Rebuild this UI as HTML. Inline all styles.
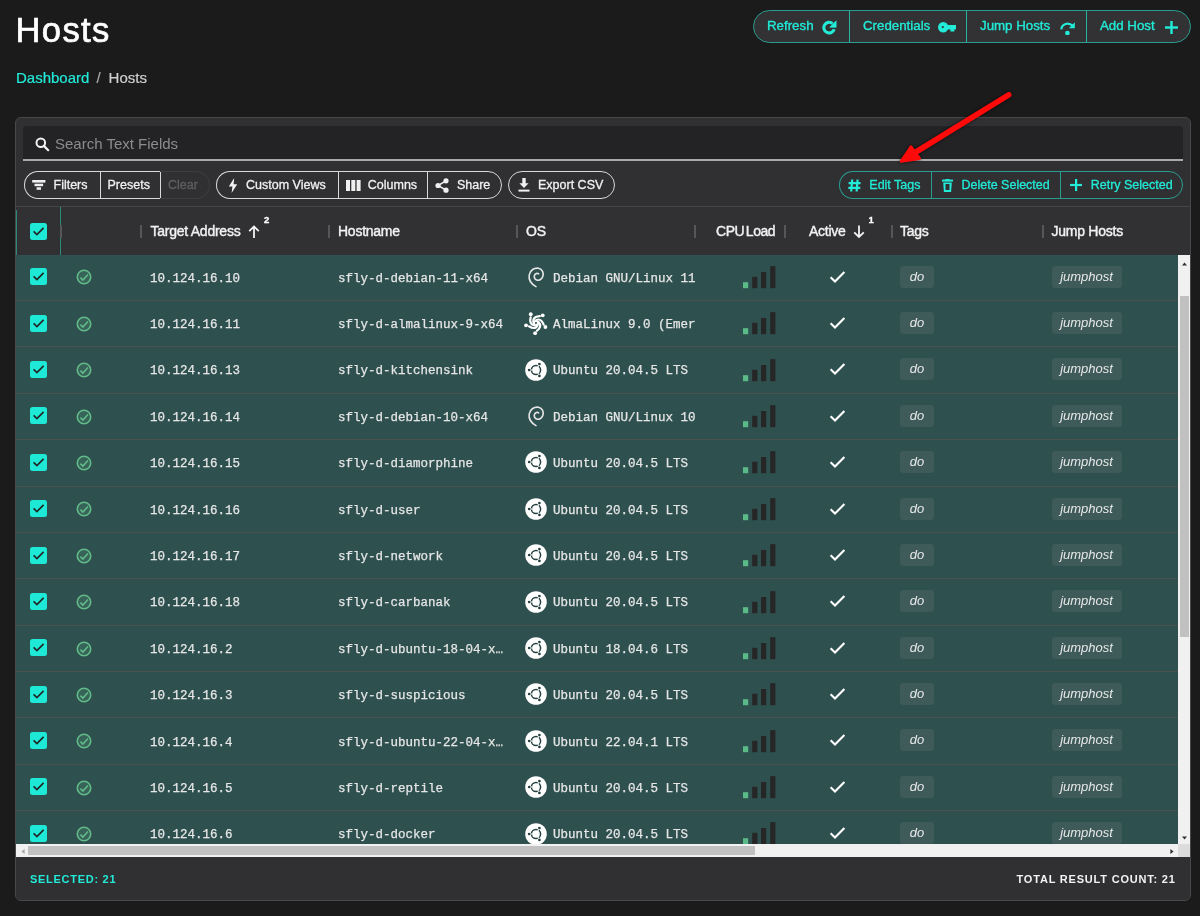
<!DOCTYPE html>
<html><head><meta charset="utf-8">
<style>
*{box-sizing:border-box;margin:0;padding:0}
html,body{-webkit-font-smoothing:antialiased;width:1200px;height:916px;overflow:hidden;background:#1b1b1b;font-family:"Liberation Sans",sans-serif;color:#fff}
.abs{position:absolute}
h1{position:absolute;left:15.5px;top:9.5px;font-size:34.6px;font-weight:normal;line-height:40px;color:#fff;letter-spacing:1.35px;-webkit-text-stroke:0.7px #fff}
.bc{position:absolute;left:16px;top:68px;font-size:15px;line-height:20px;color:#cfcfcf;-webkit-text-stroke:0.2px}
.bc a{color:#22ebd8;text-decoration:none}
.bc .sep{margin:0 8px 0 7px;color:#aaa}
.hbtns{position:absolute;left:753px;top:10px;width:438px;height:33px;border:1px solid #2a9d90;border-radius:17px;background:#323234;overflow:hidden}
.hbtn{position:absolute;top:0;height:31px;border-left:1px solid #2ab3a5;color:#22ebd8;font-size:13.3px;line-height:31px;-webkit-text-stroke:0.35px #22ebd8}
.hbtn span{position:absolute;top:-1px}
.hbtn svg{position:absolute}
.card{position:absolute;left:15px;top:117px;width:1176px;height:784px;border:1px solid #48484a;border-radius:6px;background:#303032;overflow:hidden}
.search{position:absolute;left:7px;top:8px;width:1160px;height:35px;background:#232325;border-radius:4px 4px 0 0;border-bottom:2px solid #a9a9a9}
.search .ph{position:absolute;left:32px;top:9px;font-size:15px;line-height:18px;color:#8c8c8c}
.tb{position:absolute;top:53px;height:28px;border:1.5px solid #d9d9d9;color:#f0f0f0;font-size:12.5px;line-height:26px;-webkit-text-stroke:0.3px}
.tb span{position:absolute;top:0}
.tb svg{position:absolute}
.act{position:absolute;top:53px;height:28px;border:1px solid #2a9d90;color:#22ebd8;font-size:12.5px;line-height:26px;background:#303032;-webkit-text-stroke:0.3px #22ebd8}
.act span{position:absolute;top:0}
.act svg{position:absolute}
.thead{position:absolute;left:0;top:88px;width:1174px;height:49.5px;border-top:1px solid #464648;background:#313133}
.th{position:absolute;top:0;height:49px;font-size:14px;line-height:49px;color:#f2f2f2;letter-spacing:-0.25px;white-space:nowrap;-webkit-text-stroke:0.4px #f2f2f2}
.rz{position:absolute;top:18px;width:2px;height:12.5px;background:#565656}
.sup{position:absolute;font-size:9.5px;font-weight:bold;line-height:10px;color:#fff;-webkit-text-stroke:0.3px #fff}
.tbody{position:absolute;left:0;top:136.6px;width:1162px;height:589.4px;overflow:hidden;background:#2e504f}
.row{position:absolute;left:0;width:1162px;height:46.39px;border-bottom:1px solid #4a5050;background:#2e504f}
.row>div{position:absolute}
.cb{top:13.6px}
.st{left:59.6px;top:14.8px}
.mono{font-family:"Liberation Mono",monospace;font-size:12.5px;line-height:16px;top:16.1px;color:#e6e6e6;white-space:nowrap;-webkit-text-stroke:0.25px #e6e6e6}
.ip{left:134px}
.hn{left:322px}
.osi-ubuntu{left:508.9px;top:11.3px}.osi-debian{left:504px;top:7.2px}.osi-alma{left:504px;top:6.8px}
.os{left:537px}
.bars{left:726.5px;top:11.2px}
.chk{left:813px;top:15px}
.tag{top:11px;height:22px;border-radius:3px;background:#3e5b5a;font-style:italic;font-size:13px;line-height:22px;color:#e8e8e8;text-align:center}
.tg1{left:884px;width:34px}
.tg2{left:1035.5px;width:70px}
.vscroll{position:absolute;left:1162px;top:136.6px;width:12px;height:589.4px;background:#f1f1f1}
.hscroll{position:absolute;left:0;top:726px;width:1162px;height:13px;background:#f1f1f1}
.corner{position:absolute;left:1162px;top:726px;width:12px;height:13px;background:#dcdcdc}
.footer{position:absolute;left:0;top:739px;width:1174px;height:44px;background:#303032}
.ft{position:absolute;top:15px;font-size:11px;font-weight:bold;letter-spacing:0.72px;line-height:14px}
</style></head><body><div id="root" style="position:absolute;left:0;top:0;width:1200px;height:916px;will-change:transform">
<h1>Hosts</h1>
<div class="bc"><a>Dashboard</a><span class="sep">/</span>Hosts</div>

<div class="hbtns">
 <div class="hbtn" style="left:-1px;width:96px;border-left:none"><span style="left:14px">Refresh</span><svg style="left:69px;top:9px" width="15" height="15" viewBox="0 0 15 15"><path d="M12.2 9.2 A5.3 5.3 0 1 1 10.6 3.6" fill="none" stroke="#22ebd8" stroke-width="3.1"/><path d="M14.2 0.8 V7.3 H7.7 Z" fill="#22ebd8" stroke="#22ebd8" stroke-width="0.6" stroke-linejoin="round"/></svg></div>
 <div class="hbtn" style="left:95px;width:118px"><span style="left:13px">Credentials</span><svg style="left:88px;top:10.5px" width="19" height="11" viewBox="0 0 19 11"><circle cx="5.2" cy="5.2" r="5.2" fill="#22ebd8"/><circle cx="4.8" cy="5.1" r="1.1" fill="#323234"/><rect x="9" y="3" width="9" height="4.4" fill="#22ebd8"/><rect x="12.4" y="3" width="4" height="6.5" fill="#22ebd8"/></svg></div>
 <div class="hbtn" style="left:212px;width:120px"><span style="left:13px">Jump Hosts</span><svg style="left:93px;top:7px" width="16" height="17" viewBox="0 0 16 17"><path d="M1.3 11.3 C 2 6 8 3.5 13 8" fill="none" stroke="#22ebd8" stroke-width="2.3"/><path d="M14.8 4.2 V10.3 H8.8 Z" fill="#22ebd8"/><circle cx="7.4" cy="15" r="2.3" fill="#22ebd8"/></svg></div>
 <div class="hbtn" style="left:332px;width:106px"><span style="left:13px">Add Host</span><svg style="left:78px;top:10px" width="13" height="13" viewBox="0 0 13 13"><rect x="5.3" y="0" width="2.4" height="13" fill="#22ebd8"/><rect x="0" y="5.3" width="13" height="2.4" fill="#22ebd8"/></svg></div>
</div>

<div class="card">
 <div class="search"><svg class="abs" style="left:12px;top:11px" width="15" height="15" viewBox="0 0 15 15"><circle cx="5.8" cy="5.8" r="4.3" fill="none" stroke="#f2f2f2" stroke-width="2"/><path d="M8.9 8.9 L13.2 13.2" stroke="#f2f2f2" stroke-width="2.2" stroke-linecap="round"/></svg><span class="ph">Search Text Fields</span></div>
 <!-- toolbar left -->
 <div class="tb" style="left:7.5px;width:77px;border-radius:15px 0 0 15px;border-right:none"><svg style="left:7px;top:8px" width="14" height="11" viewBox="0 0 14 11"><rect x="0.2" y="0" width="13.2" height="2.6" fill="#f0f0f0"/><rect x="2.5" y="3.7" width="8.6" height="2.5" fill="#f0f0f0"/><rect x="4.6" y="7.3" width="4.4" height="2.5" fill="#f0f0f0"/></svg><span style="left:29px">Filters</span></div>
 <div class="tb" style="left:83.5px;width:61px"><span style="left:7px">Presets</span></div>
 <div class="tb" style="left:144px;width:50px;border-radius:0 15px 15px 0;border:1px solid #3d3d3f;border-left:none;color:#5f5f61"><span style="left:8px">Clear</span></div>

 <div class="tb" style="left:200px;width:123px;border-radius:15px 0 0 15px;border-right:none"><svg style="left:11px;top:6px" width="10" height="15" viewBox="0 0 10 15"><path d="M6.2 0 L0.8 8.6 H4.4 L3.6 15 L9.2 6.2 H5.6 Z" fill="#f0f0f0"/></svg><span style="left:29px">Custom Views</span></div>
 <div class="tb" style="left:321.8px;width:90px;border-right:none"><svg style="left:7px;top:8px" width="15" height="11" viewBox="0 0 15 11"><rect x="0" y="0" width="4" height="11" fill="#f0f0f0"/><rect x="5.3" y="0" width="4" height="11" fill="#f0f0f0"/><rect x="10.6" y="0" width="4" height="11" fill="#f0f0f0"/></svg><span style="left:29px">Columns</span></div>
 <div class="tb" style="left:410.9px;width:75px;border-radius:0 15px 15px 0"><svg style="left:7px;top:6px" width="14" height="15" viewBox="0 0 14 15"><circle cx="11" cy="2.8" r="2.6" fill="#f0f0f0"/><circle cx="3" cy="7.5" r="2.6" fill="#f0f0f0"/><circle cx="11" cy="12.2" r="2.6" fill="#f0f0f0"/><path d="M11 2.8 L3 7.5 L11 12.2" fill="none" stroke="#f0f0f0" stroke-width="1.5"/></svg><span style="left:29px">Share</span></div>

 <div class="tb" style="left:492px;width:107px;border-radius:15px"><svg style="left:9px;top:6px" width="12" height="14" viewBox="0 0 12 14"><path d="M4.3 0 H7.7 V5.2 H10.6 L6 10 L1.4 5.2 H4.3 Z" fill="#f0f0f0"/><rect x="0.5" y="11.6" width="11" height="2" fill="#f0f0f0"/></svg><span style="left:29px">Export CSV</span></div>

 <!-- action group -->
 <div class="act" style="left:823.3px;width:92px;border-radius:15px 0 0 15px;border-right:none"><svg style="left:8px;top:7px" width="13" height="13" viewBox="0 0 13 13"><path d="M4.2 0.5 L3.2 12.5 M9.6 0.5 L8.6 12.5 M0.6 4.2 H12.6 M0.3 8.8 H12.3" stroke="#22ebd8" stroke-width="2.2"/></svg><span style="left:29px">Edit Tags</span></div>
 <div class="act" style="left:914.5px;width:130px;border-right:none"><svg style="left:10px;top:7px" width="11" height="13" viewBox="0 0 11 13"><rect x="0" y="0.6" width="11" height="2" fill="#22ebd8"/><rect x="3.5" y="0" width="4" height="1.5" fill="#22ebd8"/><path d="M1.2 3.6 H9.8 L9.1 13 H1.9 Z" fill="#22ebd8"/><rect x="3.5" y="5" width="4" height="6" fill="#303032"/></svg><span style="left:30px">Delete Selected</span></div>
 <div class="act" style="left:1043.7px;width:123px;border-radius:0 15px 15px 0"><svg style="left:9px;top:7px" width="12" height="12" viewBox="0 0 12 12"><rect x="5" y="0" width="2.2" height="12" fill="#22ebd8"/><rect x="0" y="4.9" width="12" height="2.2" fill="#22ebd8"/></svg><span style="left:30px">Retry Selected</span></div>

 <!-- table header -->
 <div class="thead">
  <div class="abs" style="left:0;top:3px;width:1px;height:46px;background:#2a8a7c"></div>
  <div class="abs" style="left:44px;top:0;width:1px;height:49px;background:#2a8a7c"></div>
  <div class="abs" style="left:14px;top:16px"><svg width="17" height="17" viewBox="0 0 17 17"><rect x="0" y="0" width="17" height="17" rx="2.5" fill="#1de9d6"/><path d="M3.6 8.4 L6.9 11.6 L13.6 4.9" fill="none" stroke="#232325" stroke-width="1.65"/></svg></div>
  <div class="rz" style="left:44px"></div>
  <div class="rz" style="left:124px"></div>
  <div class="th" style="left:134.5px">Target Address</div>
  <svg class="abs" style="left:232px;top:18px" width="12" height="14" viewBox="0 0 12 14"><path d="M6 1.5 V13 M1.2 6.2 L6 1.5 L10.8 6.2" fill="none" stroke="#f2f2f2" stroke-width="1.8"/></svg>
  <div class="sup" style="left:248px;top:8px">2</div>
  <div class="rz" style="left:312px"></div>
  <div class="th" style="left:322px">Hostname</div>
  <div class="rz" style="left:500px"></div>
  <div class="th" style="left:510px">OS</div>
  <div class="rz" style="left:678px"></div>
  <div class="th" style="left:700px;word-spacing:-1.8px;letter-spacing:-0.45px">CPU Load</div>
  <div class="rz" style="left:767.5px"></div>
  <div class="th" style="left:793px">Active</div>
  <svg class="abs" style="left:837px;top:18px" width="12" height="14" viewBox="0 0 12 14"><path d="M6 0.5 V12 M1.2 7.3 L6 12 L10.8 7.3" fill="none" stroke="#f2f2f2" stroke-width="1.8"/></svg>
  <div class="sup" style="left:852.5px;top:8px">1</div>
  <div class="rz" style="left:874.5px"></div>
  <div class="th" style="left:884px">Tags</div>
  <div class="rz" style="left:1025.5px"></div>
  <div class="th" style="left:1035.5px">Jump Hosts</div>
 </div>
 <div class="tbody">
 <div class="row" style="top:0.00px">
<div class="cb" style="left:14px"><svg width="17" height="17" viewBox="0 0 17 17"><rect x="0" y="0" width="17" height="17" rx="2.5" fill="#1de9d6"/><path d="M3.6 8.4 L6.9 11.6 L13.6 4.9" fill="none" stroke="#232325" stroke-width="1.65"/></svg></div>
<div class="st"><svg width="16" height="16" viewBox="0 0 16 16"><circle cx="8" cy="8" r="6.7" fill="rgba(98,187,136,0.18)" stroke="#62bb88" stroke-width="1.6"/><path d="M4.4 8.7 L6.9 11.1 L12 5.5" fill="none" stroke="#62bb88" stroke-width="1.6"/></svg></div>
<div class="mono ip">10.124.16.10</div>
<div class="mono hn">sfly-d-debian-11-x64</div>
<div class="osi osi-debian"><svg width="30" height="30" viewBox="0 0 30 30"><path d="M16 24.6 C 10.5 21.5, 8.6 17, 9.2 13 C 10 8, 14.5 5.6, 18.5 6.2 C 22.5 7, 24 11, 22.8 14.6 C 21.8 17.6, 18.8 18.8, 16.6 18 C 14.4 17.2, 13.6 14.6, 14.8 12.8 C 15.8 11.3, 17.6 11.2, 18.6 11.8" fill="none" stroke="#e6e6e6" stroke-width="1.6" stroke-linecap="round"/></svg></div>
<div class="mono os">Debian GNU/Linux 11</div>
<div class="bars"><svg width="33" height="23" viewBox="0 0 33 23"><rect x="0" y="16.2" width="5.2" height="6" fill="#5bbb88"/><rect x="9.2" y="10.8" width="5.2" height="11.4" fill="#262626"/><rect x="18" y="6" width="5.2" height="16.2" fill="#262626"/><rect x="27.2" y="0.2" width="5.2" height="22" fill="#262626"/></svg></div>
<div class="chk"><svg width="17" height="14" viewBox="0 0 17 14"><path d="M1.6 7.2 L6 11.6 L15.4 2" fill="none" stroke="#fff" stroke-width="2.1"/></svg></div>
<div class="tag tg1">do</div>
<div class="tag tg2">jumphost</div>
</div><div class="row" style="top:46.39px">
<div class="cb" style="left:14px"><svg width="17" height="17" viewBox="0 0 17 17"><rect x="0" y="0" width="17" height="17" rx="2.5" fill="#1de9d6"/><path d="M3.6 8.4 L6.9 11.6 L13.6 4.9" fill="none" stroke="#232325" stroke-width="1.65"/></svg></div>
<div class="st"><svg width="16" height="16" viewBox="0 0 16 16"><circle cx="8" cy="8" r="6.7" fill="rgba(98,187,136,0.18)" stroke="#62bb88" stroke-width="1.6"/><path d="M4.4 8.7 L6.9 11.1 L12 5.5" fill="none" stroke="#62bb88" stroke-width="1.6"/></svg></div>
<div class="mono ip">10.124.16.11</div>
<div class="mono hn">sfly-d-almalinux-9-x64</div>
<div class="osi osi-alma"><svg width="32" height="30" viewBox="0 0 32 30"><g fill="#fff"><circle cx="10.75" cy="6.26" r="1.9"/><path d="M10.68 9.30 C8.79 17.07 14.04 17.90 16.55 16.92" fill="none" stroke="#fff" stroke-width="2.2" stroke-linecap="round"/><circle cx="22.69" cy="7.30" r="1.9"/><path d="M19.78 8.18 C11.81 8.78 12.64 14.04 14.34 16.12" fill="none" stroke="#fff" stroke-width="2.2" stroke-linecap="round"/><circle cx="25.39" cy="18.99" r="1.9"/><path d="M23.66 16.49 C20.62 9.09 15.88 11.50 14.42 13.77" fill="none" stroke="#fff" stroke-width="2.2" stroke-linecap="round"/><circle cx="15.11" cy="25.16" r="1.9"/><path d="M16.95 22.74 C23.05 17.57 19.29 13.80 16.68 13.12" fill="none" stroke="#fff" stroke-width="2.2" stroke-linecap="round"/><circle cx="6.06" cy="17.29" r="1.9"/><path d="M8.93 18.30 C15.74 22.50 18.15 17.76 18.00 15.07" fill="none" stroke="#fff" stroke-width="2.2" stroke-linecap="round"/></g></svg></div>
<div class="mono os">AlmaLinux 9.0 (Emer</div>
<div class="bars"><svg width="33" height="23" viewBox="0 0 33 23"><rect x="0" y="16.2" width="5.2" height="6" fill="#5bbb88"/><rect x="9.2" y="10.8" width="5.2" height="11.4" fill="#262626"/><rect x="18" y="6" width="5.2" height="16.2" fill="#262626"/><rect x="27.2" y="0.2" width="5.2" height="22" fill="#262626"/></svg></div>
<div class="chk"><svg width="17" height="14" viewBox="0 0 17 14"><path d="M1.6 7.2 L6 11.6 L15.4 2" fill="none" stroke="#fff" stroke-width="2.1"/></svg></div>
<div class="tag tg1">do</div>
<div class="tag tg2">jumphost</div>
</div><div class="row" style="top:92.78px">
<div class="cb" style="left:14px"><svg width="17" height="17" viewBox="0 0 17 17"><rect x="0" y="0" width="17" height="17" rx="2.5" fill="#1de9d6"/><path d="M3.6 8.4 L6.9 11.6 L13.6 4.9" fill="none" stroke="#232325" stroke-width="1.65"/></svg></div>
<div class="st"><svg width="16" height="16" viewBox="0 0 16 16"><circle cx="8" cy="8" r="6.7" fill="rgba(98,187,136,0.18)" stroke="#62bb88" stroke-width="1.6"/><path d="M4.4 8.7 L6.9 11.1 L12 5.5" fill="none" stroke="#62bb88" stroke-width="1.6"/></svg></div>
<div class="mono ip">10.124.16.13</div>
<div class="mono hn">sfly-d-kitchensink</div>
<div class="osi osi-ubuntu"><svg width="22" height="22" viewBox="0 0 22 22"><circle cx="11" cy="11" r="10.8" fill="#fff"/><circle cx="11" cy="11" r="4.6" fill="none" stroke="#24403f" stroke-width="1.5"/><path d="M7.40 11.00 L5.10 11.00" stroke="#fff" stroke-width="1.2"/><path d="M12.80 7.88 L13.95 5.89" stroke="#fff" stroke-width="1.2"/><path d="M12.80 14.12 L13.95 16.11" stroke="#fff" stroke-width="1.2"/><circle cx="4.20" cy="11.00" r="1.35" fill="#24403f"/><circle cx="14.40" cy="5.11" r="1.35" fill="#24403f"/><circle cx="14.40" cy="16.89" r="1.35" fill="#24403f"/></svg></div>
<div class="mono os">Ubuntu 20.04.5 LTS</div>
<div class="bars"><svg width="33" height="23" viewBox="0 0 33 23"><rect x="0" y="16.2" width="5.2" height="6" fill="#5bbb88"/><rect x="9.2" y="10.8" width="5.2" height="11.4" fill="#262626"/><rect x="18" y="6" width="5.2" height="16.2" fill="#262626"/><rect x="27.2" y="0.2" width="5.2" height="22" fill="#262626"/></svg></div>
<div class="chk"><svg width="17" height="14" viewBox="0 0 17 14"><path d="M1.6 7.2 L6 11.6 L15.4 2" fill="none" stroke="#fff" stroke-width="2.1"/></svg></div>
<div class="tag tg1">do</div>
<div class="tag tg2">jumphost</div>
</div><div class="row" style="top:139.17px">
<div class="cb" style="left:14px"><svg width="17" height="17" viewBox="0 0 17 17"><rect x="0" y="0" width="17" height="17" rx="2.5" fill="#1de9d6"/><path d="M3.6 8.4 L6.9 11.6 L13.6 4.9" fill="none" stroke="#232325" stroke-width="1.65"/></svg></div>
<div class="st"><svg width="16" height="16" viewBox="0 0 16 16"><circle cx="8" cy="8" r="6.7" fill="rgba(98,187,136,0.18)" stroke="#62bb88" stroke-width="1.6"/><path d="M4.4 8.7 L6.9 11.1 L12 5.5" fill="none" stroke="#62bb88" stroke-width="1.6"/></svg></div>
<div class="mono ip">10.124.16.14</div>
<div class="mono hn">sfly-d-debian-10-x64</div>
<div class="osi osi-debian"><svg width="30" height="30" viewBox="0 0 30 30"><path d="M16 24.6 C 10.5 21.5, 8.6 17, 9.2 13 C 10 8, 14.5 5.6, 18.5 6.2 C 22.5 7, 24 11, 22.8 14.6 C 21.8 17.6, 18.8 18.8, 16.6 18 C 14.4 17.2, 13.6 14.6, 14.8 12.8 C 15.8 11.3, 17.6 11.2, 18.6 11.8" fill="none" stroke="#e6e6e6" stroke-width="1.6" stroke-linecap="round"/></svg></div>
<div class="mono os">Debian GNU/Linux 10</div>
<div class="bars"><svg width="33" height="23" viewBox="0 0 33 23"><rect x="0" y="16.2" width="5.2" height="6" fill="#5bbb88"/><rect x="9.2" y="10.8" width="5.2" height="11.4" fill="#262626"/><rect x="18" y="6" width="5.2" height="16.2" fill="#262626"/><rect x="27.2" y="0.2" width="5.2" height="22" fill="#262626"/></svg></div>
<div class="chk"><svg width="17" height="14" viewBox="0 0 17 14"><path d="M1.6 7.2 L6 11.6 L15.4 2" fill="none" stroke="#fff" stroke-width="2.1"/></svg></div>
<div class="tag tg1">do</div>
<div class="tag tg2">jumphost</div>
</div><div class="row" style="top:185.56px">
<div class="cb" style="left:14px"><svg width="17" height="17" viewBox="0 0 17 17"><rect x="0" y="0" width="17" height="17" rx="2.5" fill="#1de9d6"/><path d="M3.6 8.4 L6.9 11.6 L13.6 4.9" fill="none" stroke="#232325" stroke-width="1.65"/></svg></div>
<div class="st"><svg width="16" height="16" viewBox="0 0 16 16"><circle cx="8" cy="8" r="6.7" fill="rgba(98,187,136,0.18)" stroke="#62bb88" stroke-width="1.6"/><path d="M4.4 8.7 L6.9 11.1 L12 5.5" fill="none" stroke="#62bb88" stroke-width="1.6"/></svg></div>
<div class="mono ip">10.124.16.15</div>
<div class="mono hn">sfly-d-diamorphine</div>
<div class="osi osi-ubuntu"><svg width="22" height="22" viewBox="0 0 22 22"><circle cx="11" cy="11" r="10.8" fill="#fff"/><circle cx="11" cy="11" r="4.6" fill="none" stroke="#24403f" stroke-width="1.5"/><path d="M7.40 11.00 L5.10 11.00" stroke="#fff" stroke-width="1.2"/><path d="M12.80 7.88 L13.95 5.89" stroke="#fff" stroke-width="1.2"/><path d="M12.80 14.12 L13.95 16.11" stroke="#fff" stroke-width="1.2"/><circle cx="4.20" cy="11.00" r="1.35" fill="#24403f"/><circle cx="14.40" cy="5.11" r="1.35" fill="#24403f"/><circle cx="14.40" cy="16.89" r="1.35" fill="#24403f"/></svg></div>
<div class="mono os">Ubuntu 20.04.5 LTS</div>
<div class="bars"><svg width="33" height="23" viewBox="0 0 33 23"><rect x="0" y="16.2" width="5.2" height="6" fill="#5bbb88"/><rect x="9.2" y="10.8" width="5.2" height="11.4" fill="#262626"/><rect x="18" y="6" width="5.2" height="16.2" fill="#262626"/><rect x="27.2" y="0.2" width="5.2" height="22" fill="#262626"/></svg></div>
<div class="chk"><svg width="17" height="14" viewBox="0 0 17 14"><path d="M1.6 7.2 L6 11.6 L15.4 2" fill="none" stroke="#fff" stroke-width="2.1"/></svg></div>
<div class="tag tg1">do</div>
<div class="tag tg2">jumphost</div>
</div><div class="row" style="top:231.95px">
<div class="cb" style="left:14px"><svg width="17" height="17" viewBox="0 0 17 17"><rect x="0" y="0" width="17" height="17" rx="2.5" fill="#1de9d6"/><path d="M3.6 8.4 L6.9 11.6 L13.6 4.9" fill="none" stroke="#232325" stroke-width="1.65"/></svg></div>
<div class="st"><svg width="16" height="16" viewBox="0 0 16 16"><circle cx="8" cy="8" r="6.7" fill="rgba(98,187,136,0.18)" stroke="#62bb88" stroke-width="1.6"/><path d="M4.4 8.7 L6.9 11.1 L12 5.5" fill="none" stroke="#62bb88" stroke-width="1.6"/></svg></div>
<div class="mono ip">10.124.16.16</div>
<div class="mono hn">sfly-d-user</div>
<div class="osi osi-ubuntu"><svg width="22" height="22" viewBox="0 0 22 22"><circle cx="11" cy="11" r="10.8" fill="#fff"/><circle cx="11" cy="11" r="4.6" fill="none" stroke="#24403f" stroke-width="1.5"/><path d="M7.40 11.00 L5.10 11.00" stroke="#fff" stroke-width="1.2"/><path d="M12.80 7.88 L13.95 5.89" stroke="#fff" stroke-width="1.2"/><path d="M12.80 14.12 L13.95 16.11" stroke="#fff" stroke-width="1.2"/><circle cx="4.20" cy="11.00" r="1.35" fill="#24403f"/><circle cx="14.40" cy="5.11" r="1.35" fill="#24403f"/><circle cx="14.40" cy="16.89" r="1.35" fill="#24403f"/></svg></div>
<div class="mono os">Ubuntu 20.04.5 LTS</div>
<div class="bars"><svg width="33" height="23" viewBox="0 0 33 23"><rect x="0" y="16.2" width="5.2" height="6" fill="#5bbb88"/><rect x="9.2" y="10.8" width="5.2" height="11.4" fill="#262626"/><rect x="18" y="6" width="5.2" height="16.2" fill="#262626"/><rect x="27.2" y="0.2" width="5.2" height="22" fill="#262626"/></svg></div>
<div class="chk"><svg width="17" height="14" viewBox="0 0 17 14"><path d="M1.6 7.2 L6 11.6 L15.4 2" fill="none" stroke="#fff" stroke-width="2.1"/></svg></div>
<div class="tag tg1">do</div>
<div class="tag tg2">jumphost</div>
</div><div class="row" style="top:278.34px">
<div class="cb" style="left:14px"><svg width="17" height="17" viewBox="0 0 17 17"><rect x="0" y="0" width="17" height="17" rx="2.5" fill="#1de9d6"/><path d="M3.6 8.4 L6.9 11.6 L13.6 4.9" fill="none" stroke="#232325" stroke-width="1.65"/></svg></div>
<div class="st"><svg width="16" height="16" viewBox="0 0 16 16"><circle cx="8" cy="8" r="6.7" fill="rgba(98,187,136,0.18)" stroke="#62bb88" stroke-width="1.6"/><path d="M4.4 8.7 L6.9 11.1 L12 5.5" fill="none" stroke="#62bb88" stroke-width="1.6"/></svg></div>
<div class="mono ip">10.124.16.17</div>
<div class="mono hn">sfly-d-network</div>
<div class="osi osi-ubuntu"><svg width="22" height="22" viewBox="0 0 22 22"><circle cx="11" cy="11" r="10.8" fill="#fff"/><circle cx="11" cy="11" r="4.6" fill="none" stroke="#24403f" stroke-width="1.5"/><path d="M7.40 11.00 L5.10 11.00" stroke="#fff" stroke-width="1.2"/><path d="M12.80 7.88 L13.95 5.89" stroke="#fff" stroke-width="1.2"/><path d="M12.80 14.12 L13.95 16.11" stroke="#fff" stroke-width="1.2"/><circle cx="4.20" cy="11.00" r="1.35" fill="#24403f"/><circle cx="14.40" cy="5.11" r="1.35" fill="#24403f"/><circle cx="14.40" cy="16.89" r="1.35" fill="#24403f"/></svg></div>
<div class="mono os">Ubuntu 20.04.5 LTS</div>
<div class="bars"><svg width="33" height="23" viewBox="0 0 33 23"><rect x="0" y="16.2" width="5.2" height="6" fill="#5bbb88"/><rect x="9.2" y="10.8" width="5.2" height="11.4" fill="#262626"/><rect x="18" y="6" width="5.2" height="16.2" fill="#262626"/><rect x="27.2" y="0.2" width="5.2" height="22" fill="#262626"/></svg></div>
<div class="chk"><svg width="17" height="14" viewBox="0 0 17 14"><path d="M1.6 7.2 L6 11.6 L15.4 2" fill="none" stroke="#fff" stroke-width="2.1"/></svg></div>
<div class="tag tg1">do</div>
<div class="tag tg2">jumphost</div>
</div><div class="row" style="top:324.73px">
<div class="cb" style="left:14px"><svg width="17" height="17" viewBox="0 0 17 17"><rect x="0" y="0" width="17" height="17" rx="2.5" fill="#1de9d6"/><path d="M3.6 8.4 L6.9 11.6 L13.6 4.9" fill="none" stroke="#232325" stroke-width="1.65"/></svg></div>
<div class="st"><svg width="16" height="16" viewBox="0 0 16 16"><circle cx="8" cy="8" r="6.7" fill="rgba(98,187,136,0.18)" stroke="#62bb88" stroke-width="1.6"/><path d="M4.4 8.7 L6.9 11.1 L12 5.5" fill="none" stroke="#62bb88" stroke-width="1.6"/></svg></div>
<div class="mono ip">10.124.16.18</div>
<div class="mono hn">sfly-d-carbanak</div>
<div class="osi osi-ubuntu"><svg width="22" height="22" viewBox="0 0 22 22"><circle cx="11" cy="11" r="10.8" fill="#fff"/><circle cx="11" cy="11" r="4.6" fill="none" stroke="#24403f" stroke-width="1.5"/><path d="M7.40 11.00 L5.10 11.00" stroke="#fff" stroke-width="1.2"/><path d="M12.80 7.88 L13.95 5.89" stroke="#fff" stroke-width="1.2"/><path d="M12.80 14.12 L13.95 16.11" stroke="#fff" stroke-width="1.2"/><circle cx="4.20" cy="11.00" r="1.35" fill="#24403f"/><circle cx="14.40" cy="5.11" r="1.35" fill="#24403f"/><circle cx="14.40" cy="16.89" r="1.35" fill="#24403f"/></svg></div>
<div class="mono os">Ubuntu 20.04.5 LTS</div>
<div class="bars"><svg width="33" height="23" viewBox="0 0 33 23"><rect x="0" y="16.2" width="5.2" height="6" fill="#5bbb88"/><rect x="9.2" y="10.8" width="5.2" height="11.4" fill="#262626"/><rect x="18" y="6" width="5.2" height="16.2" fill="#262626"/><rect x="27.2" y="0.2" width="5.2" height="22" fill="#262626"/></svg></div>
<div class="chk"><svg width="17" height="14" viewBox="0 0 17 14"><path d="M1.6 7.2 L6 11.6 L15.4 2" fill="none" stroke="#fff" stroke-width="2.1"/></svg></div>
<div class="tag tg1">do</div>
<div class="tag tg2">jumphost</div>
</div><div class="row" style="top:371.12px">
<div class="cb" style="left:14px"><svg width="17" height="17" viewBox="0 0 17 17"><rect x="0" y="0" width="17" height="17" rx="2.5" fill="#1de9d6"/><path d="M3.6 8.4 L6.9 11.6 L13.6 4.9" fill="none" stroke="#232325" stroke-width="1.65"/></svg></div>
<div class="st"><svg width="16" height="16" viewBox="0 0 16 16"><circle cx="8" cy="8" r="6.7" fill="rgba(98,187,136,0.18)" stroke="#62bb88" stroke-width="1.6"/><path d="M4.4 8.7 L6.9 11.1 L12 5.5" fill="none" stroke="#62bb88" stroke-width="1.6"/></svg></div>
<div class="mono ip">10.124.16.2</div>
<div class="mono hn">sfly-d-ubuntu-18-04-x…</div>
<div class="osi osi-ubuntu"><svg width="22" height="22" viewBox="0 0 22 22"><circle cx="11" cy="11" r="10.8" fill="#fff"/><circle cx="11" cy="11" r="4.6" fill="none" stroke="#24403f" stroke-width="1.5"/><path d="M7.40 11.00 L5.10 11.00" stroke="#fff" stroke-width="1.2"/><path d="M12.80 7.88 L13.95 5.89" stroke="#fff" stroke-width="1.2"/><path d="M12.80 14.12 L13.95 16.11" stroke="#fff" stroke-width="1.2"/><circle cx="4.20" cy="11.00" r="1.35" fill="#24403f"/><circle cx="14.40" cy="5.11" r="1.35" fill="#24403f"/><circle cx="14.40" cy="16.89" r="1.35" fill="#24403f"/></svg></div>
<div class="mono os">Ubuntu 18.04.6 LTS</div>
<div class="bars"><svg width="33" height="23" viewBox="0 0 33 23"><rect x="0" y="16.2" width="5.2" height="6" fill="#5bbb88"/><rect x="9.2" y="10.8" width="5.2" height="11.4" fill="#262626"/><rect x="18" y="6" width="5.2" height="16.2" fill="#262626"/><rect x="27.2" y="0.2" width="5.2" height="22" fill="#262626"/></svg></div>
<div class="chk"><svg width="17" height="14" viewBox="0 0 17 14"><path d="M1.6 7.2 L6 11.6 L15.4 2" fill="none" stroke="#fff" stroke-width="2.1"/></svg></div>
<div class="tag tg1">do</div>
<div class="tag tg2">jumphost</div>
</div><div class="row" style="top:417.51px">
<div class="cb" style="left:14px"><svg width="17" height="17" viewBox="0 0 17 17"><rect x="0" y="0" width="17" height="17" rx="2.5" fill="#1de9d6"/><path d="M3.6 8.4 L6.9 11.6 L13.6 4.9" fill="none" stroke="#232325" stroke-width="1.65"/></svg></div>
<div class="st"><svg width="16" height="16" viewBox="0 0 16 16"><circle cx="8" cy="8" r="6.7" fill="rgba(98,187,136,0.18)" stroke="#62bb88" stroke-width="1.6"/><path d="M4.4 8.7 L6.9 11.1 L12 5.5" fill="none" stroke="#62bb88" stroke-width="1.6"/></svg></div>
<div class="mono ip">10.124.16.3</div>
<div class="mono hn">sfly-d-suspicious</div>
<div class="osi osi-ubuntu"><svg width="22" height="22" viewBox="0 0 22 22"><circle cx="11" cy="11" r="10.8" fill="#fff"/><circle cx="11" cy="11" r="4.6" fill="none" stroke="#24403f" stroke-width="1.5"/><path d="M7.40 11.00 L5.10 11.00" stroke="#fff" stroke-width="1.2"/><path d="M12.80 7.88 L13.95 5.89" stroke="#fff" stroke-width="1.2"/><path d="M12.80 14.12 L13.95 16.11" stroke="#fff" stroke-width="1.2"/><circle cx="4.20" cy="11.00" r="1.35" fill="#24403f"/><circle cx="14.40" cy="5.11" r="1.35" fill="#24403f"/><circle cx="14.40" cy="16.89" r="1.35" fill="#24403f"/></svg></div>
<div class="mono os">Ubuntu 20.04.5 LTS</div>
<div class="bars"><svg width="33" height="23" viewBox="0 0 33 23"><rect x="0" y="16.2" width="5.2" height="6" fill="#5bbb88"/><rect x="9.2" y="10.8" width="5.2" height="11.4" fill="#262626"/><rect x="18" y="6" width="5.2" height="16.2" fill="#262626"/><rect x="27.2" y="0.2" width="5.2" height="22" fill="#262626"/></svg></div>
<div class="chk"><svg width="17" height="14" viewBox="0 0 17 14"><path d="M1.6 7.2 L6 11.6 L15.4 2" fill="none" stroke="#fff" stroke-width="2.1"/></svg></div>
<div class="tag tg1">do</div>
<div class="tag tg2">jumphost</div>
</div><div class="row" style="top:463.90px">
<div class="cb" style="left:14px"><svg width="17" height="17" viewBox="0 0 17 17"><rect x="0" y="0" width="17" height="17" rx="2.5" fill="#1de9d6"/><path d="M3.6 8.4 L6.9 11.6 L13.6 4.9" fill="none" stroke="#232325" stroke-width="1.65"/></svg></div>
<div class="st"><svg width="16" height="16" viewBox="0 0 16 16"><circle cx="8" cy="8" r="6.7" fill="rgba(98,187,136,0.18)" stroke="#62bb88" stroke-width="1.6"/><path d="M4.4 8.7 L6.9 11.1 L12 5.5" fill="none" stroke="#62bb88" stroke-width="1.6"/></svg></div>
<div class="mono ip">10.124.16.4</div>
<div class="mono hn">sfly-d-ubuntu-22-04-x…</div>
<div class="osi osi-ubuntu"><svg width="22" height="22" viewBox="0 0 22 22"><circle cx="11" cy="11" r="10.8" fill="#fff"/><circle cx="11" cy="11" r="4.6" fill="none" stroke="#24403f" stroke-width="1.5"/><path d="M7.40 11.00 L5.10 11.00" stroke="#fff" stroke-width="1.2"/><path d="M12.80 7.88 L13.95 5.89" stroke="#fff" stroke-width="1.2"/><path d="M12.80 14.12 L13.95 16.11" stroke="#fff" stroke-width="1.2"/><circle cx="4.20" cy="11.00" r="1.35" fill="#24403f"/><circle cx="14.40" cy="5.11" r="1.35" fill="#24403f"/><circle cx="14.40" cy="16.89" r="1.35" fill="#24403f"/></svg></div>
<div class="mono os">Ubuntu 22.04.1 LTS</div>
<div class="bars"><svg width="33" height="23" viewBox="0 0 33 23"><rect x="0" y="16.2" width="5.2" height="6" fill="#5bbb88"/><rect x="9.2" y="10.8" width="5.2" height="11.4" fill="#262626"/><rect x="18" y="6" width="5.2" height="16.2" fill="#262626"/><rect x="27.2" y="0.2" width="5.2" height="22" fill="#262626"/></svg></div>
<div class="chk"><svg width="17" height="14" viewBox="0 0 17 14"><path d="M1.6 7.2 L6 11.6 L15.4 2" fill="none" stroke="#fff" stroke-width="2.1"/></svg></div>
<div class="tag tg1">do</div>
<div class="tag tg2">jumphost</div>
</div><div class="row" style="top:510.29px">
<div class="cb" style="left:14px"><svg width="17" height="17" viewBox="0 0 17 17"><rect x="0" y="0" width="17" height="17" rx="2.5" fill="#1de9d6"/><path d="M3.6 8.4 L6.9 11.6 L13.6 4.9" fill="none" stroke="#232325" stroke-width="1.65"/></svg></div>
<div class="st"><svg width="16" height="16" viewBox="0 0 16 16"><circle cx="8" cy="8" r="6.7" fill="rgba(98,187,136,0.18)" stroke="#62bb88" stroke-width="1.6"/><path d="M4.4 8.7 L6.9 11.1 L12 5.5" fill="none" stroke="#62bb88" stroke-width="1.6"/></svg></div>
<div class="mono ip">10.124.16.5</div>
<div class="mono hn">sfly-d-reptile</div>
<div class="osi osi-ubuntu"><svg width="22" height="22" viewBox="0 0 22 22"><circle cx="11" cy="11" r="10.8" fill="#fff"/><circle cx="11" cy="11" r="4.6" fill="none" stroke="#24403f" stroke-width="1.5"/><path d="M7.40 11.00 L5.10 11.00" stroke="#fff" stroke-width="1.2"/><path d="M12.80 7.88 L13.95 5.89" stroke="#fff" stroke-width="1.2"/><path d="M12.80 14.12 L13.95 16.11" stroke="#fff" stroke-width="1.2"/><circle cx="4.20" cy="11.00" r="1.35" fill="#24403f"/><circle cx="14.40" cy="5.11" r="1.35" fill="#24403f"/><circle cx="14.40" cy="16.89" r="1.35" fill="#24403f"/></svg></div>
<div class="mono os">Ubuntu 20.04.5 LTS</div>
<div class="bars"><svg width="33" height="23" viewBox="0 0 33 23"><rect x="0" y="16.2" width="5.2" height="6" fill="#5bbb88"/><rect x="9.2" y="10.8" width="5.2" height="11.4" fill="#262626"/><rect x="18" y="6" width="5.2" height="16.2" fill="#262626"/><rect x="27.2" y="0.2" width="5.2" height="22" fill="#262626"/></svg></div>
<div class="chk"><svg width="17" height="14" viewBox="0 0 17 14"><path d="M1.6 7.2 L6 11.6 L15.4 2" fill="none" stroke="#fff" stroke-width="2.1"/></svg></div>
<div class="tag tg1">do</div>
<div class="tag tg2">jumphost</div>
</div><div class="row" style="top:556.68px">
<div class="cb" style="left:14px"><svg width="17" height="17" viewBox="0 0 17 17"><rect x="0" y="0" width="17" height="17" rx="2.5" fill="#1de9d6"/><path d="M3.6 8.4 L6.9 11.6 L13.6 4.9" fill="none" stroke="#232325" stroke-width="1.65"/></svg></div>
<div class="st"><svg width="16" height="16" viewBox="0 0 16 16"><circle cx="8" cy="8" r="6.7" fill="rgba(98,187,136,0.18)" stroke="#62bb88" stroke-width="1.6"/><path d="M4.4 8.7 L6.9 11.1 L12 5.5" fill="none" stroke="#62bb88" stroke-width="1.6"/></svg></div>
<div class="mono ip">10.124.16.6</div>
<div class="mono hn">sfly-d-docker</div>
<div class="osi osi-ubuntu"><svg width="22" height="22" viewBox="0 0 22 22"><circle cx="11" cy="11" r="10.8" fill="#fff"/><circle cx="11" cy="11" r="4.6" fill="none" stroke="#24403f" stroke-width="1.5"/><path d="M7.40 11.00 L5.10 11.00" stroke="#fff" stroke-width="1.2"/><path d="M12.80 7.88 L13.95 5.89" stroke="#fff" stroke-width="1.2"/><path d="M12.80 14.12 L13.95 16.11" stroke="#fff" stroke-width="1.2"/><circle cx="4.20" cy="11.00" r="1.35" fill="#24403f"/><circle cx="14.40" cy="5.11" r="1.35" fill="#24403f"/><circle cx="14.40" cy="16.89" r="1.35" fill="#24403f"/></svg></div>
<div class="mono os">Ubuntu 20.04.5 LTS</div>
<div class="bars"><svg width="33" height="23" viewBox="0 0 33 23"><rect x="0" y="16.2" width="5.2" height="6" fill="#5bbb88"/><rect x="9.2" y="10.8" width="5.2" height="11.4" fill="#262626"/><rect x="18" y="6" width="5.2" height="16.2" fill="#262626"/><rect x="27.2" y="0.2" width="5.2" height="22" fill="#262626"/></svg></div>
<div class="chk"><svg width="17" height="14" viewBox="0 0 17 14"><path d="M1.6 7.2 L6 11.6 L15.4 2" fill="none" stroke="#fff" stroke-width="2.1"/></svg></div>
<div class="tag tg1">do</div>
<div class="tag tg2">jumphost</div>
</div>
 </div>
 <div class="vscroll"><svg class="abs" style="left:3.5px;top:7px" width="5" height="4" viewBox="0 0 5 4"><path d="M0 3.6 L2.5 0.4 L5 3.6Z" fill="#303030"/></svg><div class="abs" style="left:2px;top:41.4px;width:9px;height:341px;background:#c1c1c1"></div><svg class="abs" style="left:3.5px;top:581px" width="5" height="4" viewBox="0 0 5 4"><path d="M0 0.4 L2.5 3.6 L5 0.4Z" fill="#303030"/></svg></div>
 <div class="hscroll"><svg class="abs" style="left:4.5px;top:4.5px" width="4" height="5" viewBox="0 0 4 5"><path d="M3.6 0 L0.4 2.5 L3.6 5Z" fill="#a8a8a8"/></svg><div class="abs" style="left:12px;top:2px;width:726.5px;height:9px;background:#c1c1c1"></div><svg class="abs" style="left:1153.5px;top:4.5px" width="4" height="5" viewBox="0 0 4 5"><path d="M0.4 0 L3.6 2.5 L0.4 5Z" fill="#303030"/></svg></div>
 <div class="corner"></div>
 <div class="footer">
  <div class="ft" style="left:14px;color:#22ebd8">SELECTED: 21</div>
  <div class="ft" style="right:14.3px;color:#f2f2f2;letter-spacing:0.8px">TOTAL RESULT COUNT: 21</div>
 </div>
</div>
<svg style="position:absolute;left:0;top:0;filter:drop-shadow(0 0 1.5px rgba(0,0,0,0.7))" width="1200" height="916" viewBox="0 0 1200 916"><path d="M1008.7 94.8 L913.5 153.5" stroke="#ff0a0a" stroke-width="5.6" stroke-linecap="round"/><path d="M901.2 161.3 L911 146.8 L919.4 158.4 Z" fill="#ff0a0a" stroke="#ff0a0a" stroke-width="3" stroke-linejoin="round"/></svg>
</div></body></html>
